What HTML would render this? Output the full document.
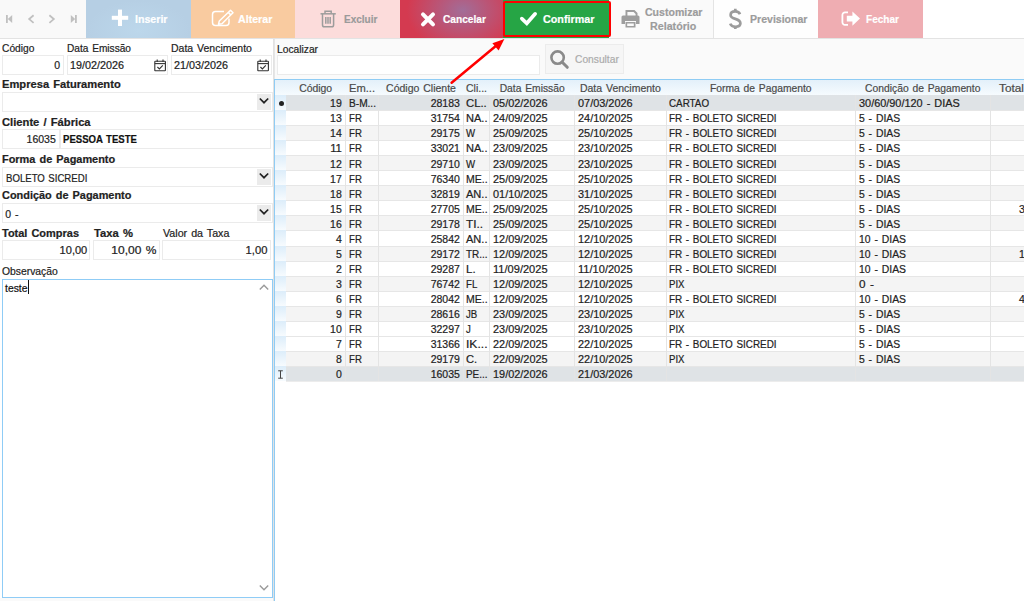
<!DOCTYPE html>
<html><head><meta charset="utf-8"><style>
html,body{margin:0;padding:0;}
body{width:1024px;height:601px;position:relative;overflow:hidden;background:#fff;font-family:"Liberation Sans",sans-serif;}
.t{position:absolute;white-space:nowrap;-webkit-text-stroke:0.2px currentColor;}
svg{overflow:visible}
</style></head><body>
<div style="position:absolute;left:0px;top:0px;width:1024px;height:38px;background:#fff;"></div>
<div style="position:absolute;left:0px;top:0px;width:86px;height:38px;background:#f9f9f9;"></div>
<div style="position:absolute;left:0px;top:38px;width:1024px;height:1px;background:#e3e3e3;"></div>
<svg style="position:absolute;left:0;top:0" width="86" height="38">
<g fill="#c0c0c0"><rect x="6" y="15" width="1.8" height="8"/><path d="M12.2 15 L7.8 19 L12.2 23 Z"/>
<path d="M70.8 15 L75.2 19 L70.8 23 Z"/><rect x="75" y="15" width="1.8" height="8"/></g>
<g fill="none" stroke="#c0c0c0" stroke-width="1.8"><path d="M33.6 15.3 L29.2 19.1 L33.6 22.9"/><path d="M49.4 15.3 L53.8 19.1 L49.4 22.9"/></g>
</svg>
<div style="position:absolute;left:86px;top:0px;width:105px;height:38px;background:radial-gradient(ellipse at 50% 80%,#bcd7eb 0%,#b6cfe4 70%);"></div>
<div style="position:absolute;left:191px;top:0px;width:104px;height:38px;background:#f9cba0;"></div>
<div style="position:absolute;left:295px;top:0px;width:105px;height:38px;background:#fcdcdb;"></div>
<div style="position:absolute;left:400px;top:0px;width:103px;height:38px;background:radial-gradient(ellipse 56px 42px at 61% 27%,#a26d98 0%,#b85779 42%,#d43a50 100%);"></div>
<div style="position:absolute;left:503px;top:0px;width:106px;height:38px;background:#26a545;"></div>
<div style="position:absolute;left:609px;top:0px;width:104px;height:38px;background:#fafafa;"></div>
<div style="position:absolute;left:713px;top:0px;width:1px;height:38px;background:#e4e4e4;"></div>
<div style="position:absolute;left:714px;top:0px;width:104px;height:38px;background:#fefefe;"></div>
<div style="position:absolute;left:818px;top:0px;width:105px;height:38px;background:#efadb2;"></div>
<div style="position:absolute;left:503px;top:1px;width:108px;height:36px;box-sizing:border-box;border:2.6px solid #ff0000;border-radius:2px;"></div>
<svg style="position:absolute;left:0;top:0" width="1024" height="40">
<g fill="#fff"><rect x="118" y="9.6" width="4" height="16.4"/><rect x="111.8" y="15.8" width="16.4" height="4"/></g>
<g fill="none" stroke="#fff" stroke-width="1.5"><path d="M224 11.5 H215.5 a3 3 0 0 0 -3 3 V22.5 a3 3 0 0 0 3 3 H226 a3 3 0 0 0 3 -3 V18.5"/></g>
<g fill="none" stroke="#fff" stroke-width="1.5" stroke-linejoin="round"><path d="M230.5 10.2 L233 12.7 L222 23.7 L218.5 24.3 L219.3 21 Z"/><path d="M228.3 12.4 L230.8 14.9"/></g>
<g fill="none" stroke="#9c9c9c" stroke-width="1.5"><path d="M320.5 13.8 H335.8"/><path d="M325 13.6 V11.2 H331.2 V13.6"/><path d="M322.5 14 V25 a1.8 1.8 0 0 0 1.8 1.8 H331.8 a1.8 1.8 0 0 0 1.8 -1.8 V14"/><path d="M325.8 17 V23.8 M328 17 V23.8 M330.2 17 V23.8"/></g>
<g stroke="#fff" stroke-width="4" stroke-linecap="round"><path d="M423 14.3 L433 24.3 M433 14.3 L423 24.3"/></g>
<g fill="none" stroke="#fff" stroke-width="3.6" stroke-linecap="round" stroke-linejoin="miter"><path d="M521.8 18.6 L526.8 23.3 L535.2 13.8"/></g>
<g fill="#9e9e9e"><path d="M625.5 10 H634.5 L637.5 13 V16.2 H635.6 V14 L633.6 12 H627.4 V16.2 H625.5 Z"/><path d="M621.5 17 a1.5 1.5 0 0 1 1.5 -1.5 H638 a1.5 1.5 0 0 1 1.5 1.5 V24 H636 V21 H625 V24 H621.5 Z"/><path d="M625.5 22 H635.5 V27.5 H625.5 Z M627.2 23.5 V26 H633.8 V23.5 Z"/></g>
<g fill="none" stroke="#9c9c9c" stroke-width="2.7" stroke-linecap="butt"><path d="M740 14.2 C739.2 12.2 737.4 11.4 735.2 11.4 C732.4 11.4 730.6 12.9 730.6 15 C730.6 17.4 732.8 18.2 735.3 18.9 C738 19.7 740.4 20.6 740.4 23.3 C740.4 25.5 738.4 26.8 735.4 26.8 C733 26.8 731 25.8 730.2 23.6"/><path d="M735.3 8.8 V11.6 M735.3 26.6 V29"/></g>
<g fill="#fff"><path d="M846.8 15.8 H852.4 V11.4 L860 18.6 L852.4 25.8 V21.4 H846.8 Z"/></g>
<g fill="none" stroke="#fff" stroke-width="1.8"><path d="M848 12.4 H845 a2.6 2.6 0 0 0 -2.6 2.6 V22.2 a2.6 2.6 0 0 0 2.6 2.6 H848"/></g>
</svg>
<div class="t" style="left:134.80px;top:11.30px;font-size:11.6px;line-height:16px;font-weight:bold;color:#fff;transform:scaleX(0.9165);transform-origin:left 0;">Inserir</div>
<div class="t" style="left:237.70px;top:11.30px;font-size:11.6px;line-height:16px;font-weight:bold;color:#fff;transform:scaleX(0.9172);transform-origin:left 0;">Alterar</div>
<div class="t" style="left:343.70px;top:11.30px;font-size:11.6px;line-height:16px;font-weight:bold;color:#9a9a9a;transform:scaleX(0.8608);transform-origin:left 0;">Excluir</div>
<div class="t" style="left:442.80px;top:11.30px;font-size:11.6px;line-height:16px;font-weight:bold;color:#fff;transform:scaleX(0.8774);transform-origin:left 0;">Cancelar</div>
<div class="t" style="left:543.20px;top:10.90px;font-size:11.6px;line-height:16px;font-weight:bold;color:#fff;transform:scaleX(0.9291);transform-origin:left 0;">Confirmar</div>
<div class="t" style="left:645.40px;top:3.90px;font-size:11.6px;line-height:16px;font-weight:bold;color:#9c9c9c;transform:scaleX(0.9103);transform-origin:left 0;">Customizar</div>
<div class="t" style="left:650.00px;top:18.40px;font-size:11.6px;line-height:16px;font-weight:bold;color:#9c9c9c;transform:scaleX(0.9229);transform-origin:left 0;">Relatório</div>
<div class="t" style="left:749.80px;top:11.30px;font-size:11.6px;line-height:16px;font-weight:bold;color:#9c9c9c;transform:scaleX(0.9100);transform-origin:left 0;">Previsionar</div>
<div class="t" style="left:866.40px;top:11.30px;font-size:11.6px;line-height:16px;font-weight:bold;color:#fff;transform:scaleX(0.8675);transform-origin:left 0;">Fechar</div>
<div style="position:absolute;left:0px;top:39px;width:273px;height:562px;background:#fff;"></div>
<div style="position:absolute;left:273px;top:39px;width:1px;height:562px;background:#e2e2e2;"></div>
<div class="t" style="left:1.60px;top:41.20px;font-size:10.5px;line-height:15px;color:#222;transform:scaleX(0.9737);transform-origin:left 0;">Código</div>
<div class="t" style="left:67.00px;top:41.20px;font-size:10.5px;line-height:15px;word-spacing:0.96px;color:#222;transform:scaleX(0.9650);transform-origin:left 0;">Data Emissão</div>
<div class="t" style="left:171.00px;top:41.20px;font-size:10.5px;line-height:15px;word-spacing:0.96px;color:#222;">Data Vencimento</div>
<div style="position:absolute;left:2px;top:55px;width:62px;height:20px;box-sizing:border-box;border:1px solid #ebebeb;background:#fff;"></div>
<div style="position:absolute;left:67px;top:55px;width:101px;height:20px;box-sizing:border-box;border:1px solid #ebebeb;background:#fff;"></div>
<div style="position:absolute;left:171px;top:55px;width:101px;height:20px;box-sizing:border-box;border:1px solid #ebebeb;background:#fff;"></div>
<div class="t" style="left:54.16px;top:58.00px;font-size:10.5px;line-height:15px;color:#222;">0</div>
<div class="t" style="left:70.00px;top:58.00px;font-size:10.5px;line-height:15px;color:#222;transform:scaleX(1.0275);transform-origin:left 0;">19/02/2026</div>
<div class="t" style="left:173.60px;top:58.00px;font-size:10.5px;line-height:15px;color:#222;transform:scaleX(1.0275);transform-origin:left 0;">21/03/2026</div>
<svg style="position:absolute;left:153.5px;top:58.6px" width="13" height="13"><g fill="none" stroke="#333" stroke-width="1.1"><rect x="0.8" y="2.2" width="10.6" height="9.6" rx="0.6"/><path d="M0.8 4.6 H11.4"/><path d="M3.2 0.6 V3 M9 0.6 V3"/><path d="M3.4 8 L5.4 9.9 L8.8 6.4"/></g></svg>
<svg style="position:absolute;left:257px;top:58.6px" width="13" height="13"><g fill="none" stroke="#333" stroke-width="1.1"><rect x="0.8" y="2.2" width="10.6" height="9.6" rx="0.6"/><path d="M0.8 4.6 H11.4"/><path d="M3.2 0.6 V3 M9 0.6 V3"/><path d="M3.4 8 L5.4 9.9 L8.8 6.4"/></g></svg>
<div class="t" style="left:1.60px;top:76.60px;font-size:10.5px;line-height:15px;word-spacing:0.96px;font-weight:bold;color:#222;transform:scaleX(1.0614);transform-origin:left 0;">Empresa Faturamento</div>
<div style="position:absolute;left:2px;top:92px;width:271px;height:20px;box-sizing:border-box;border:1px solid #ebebeb;background:#fff;"></div>
<div style="position:absolute;left:257px;top:94px;width:14px;height:16px;background:#ebebeb;"></div>
<svg style="position:absolute;left:258px;top:97px" width="12" height="8"><path d="M1.8 1.5 L6 5.7 L10.2 1.5" fill="none" stroke="#222" stroke-width="1.7"/></svg>
<div class="t" style="left:1.60px;top:114.90px;font-size:10.5px;line-height:15px;word-spacing:0.96px;font-weight:bold;color:#222;transform:scaleX(1.0670);transform-origin:left 0;">Cliente / Fábrica</div>
<div style="position:absolute;left:2px;top:129px;width:58px;height:20px;box-sizing:border-box;border:1px solid #ebebeb;background:#fff;"></div>
<div style="position:absolute;left:60px;top:129px;width:211px;height:20px;box-sizing:border-box;border:1px solid #ebebeb;background:#fff;"></div>
<div class="t" style="left:26.60px;top:131.70px;font-size:10.5px;line-height:15px;color:#222;">16035</div>
<div class="t" style="left:63.20px;top:131.70px;font-size:10.5px;line-height:15px;word-spacing:0.96px;font-weight:bold;color:#111;transform:scaleX(0.9125);transform-origin:left 0;">PESSOA TESTE</div>
<div class="t" style="left:1.60px;top:151.90px;font-size:10.5px;line-height:15px;word-spacing:0.96px;font-weight:bold;color:#222;transform:scaleX(1.0414);transform-origin:left 0;">Forma de Pagamento</div>
<div style="position:absolute;left:2px;top:167px;width:271px;height:20px;box-sizing:border-box;border:1px solid #ebebeb;background:#fff;"></div>
<div style="position:absolute;left:257px;top:169px;width:14px;height:16px;background:#ebebeb;"></div>
<svg style="position:absolute;left:258px;top:172px" width="12" height="8"><path d="M1.8 1.5 L6 5.7 L10.2 1.5" fill="none" stroke="#222" stroke-width="1.7"/></svg>
<div class="t" style="left:5.50px;top:171.20px;font-size:10.5px;line-height:15px;word-spacing:0.96px;color:#222;transform:scaleX(0.9148);transform-origin:left 0;">BOLETO SICREDI</div>
<div class="t" style="left:1.60px;top:187.90px;font-size:10.5px;line-height:15px;word-spacing:0.96px;font-weight:bold;color:#222;transform:scaleX(1.0398);transform-origin:left 0;">Condição de Pagamento</div>
<div style="position:absolute;left:2px;top:203px;width:271px;height:20px;box-sizing:border-box;border:1px solid #ebebeb;background:#fff;"></div>
<div style="position:absolute;left:257px;top:205px;width:14px;height:16px;background:#ebebeb;"></div>
<svg style="position:absolute;left:258px;top:208px" width="12" height="8"><path d="M1.8 1.5 L6 5.7 L10.2 1.5" fill="none" stroke="#222" stroke-width="1.7"/></svg>
<div class="t" style="left:5.20px;top:207.20px;font-size:10.5px;line-height:15px;word-spacing:0.96px;color:#222;">0 -</div>
<div class="t" style="left:1.60px;top:225.60px;font-size:10.5px;line-height:15px;word-spacing:0.96px;font-weight:bold;color:#222;transform:scaleX(1.0448);transform-origin:left 0;">Total Compras</div>
<div class="t" style="left:93.70px;top:225.60px;font-size:10.5px;line-height:15px;word-spacing:0.96px;font-weight:bold;color:#222;transform:scaleX(1.0696);transform-origin:left 0;">Taxa %</div>
<div class="t" style="left:162.50px;top:226.20px;font-size:10.5px;line-height:15px;word-spacing:0.96px;color:#222;transform:scaleX(1.0190);transform-origin:left 0;">Valor da Taxa</div>
<div style="position:absolute;left:2px;top:240px;width:88px;height:20px;box-sizing:border-box;border:1px solid #ebebeb;background:#fff;"></div>
<div style="position:absolute;left:93px;top:240px;width:67px;height:20px;box-sizing:border-box;border:1px solid #ebebeb;background:#fff;"></div>
<div style="position:absolute;left:162px;top:240px;width:109px;height:20px;box-sizing:border-box;border:1px solid #ebebeb;background:#fff;"></div>
<div class="t" style="left:60.52px;top:243.00px;font-size:10.5px;line-height:15px;color:#222;transform:scaleX(1.0544);transform-origin:right 0;">10,00</div>
<div class="t" style="left:116.51px;top:243.00px;font-size:10.5px;line-height:15px;word-spacing:0.96px;color:#222;transform:scaleX(1.1426);transform-origin:right 0;">10,00 %</div>
<div class="t" style="left:246.96px;top:243.00px;font-size:10.5px;line-height:15px;color:#222;transform:scaleX(1.0685);transform-origin:right 0;">1,00</div>
<div class="t" style="left:1.60px;top:263.90px;font-size:10.5px;line-height:15px;color:#222;transform:scaleX(0.9856);transform-origin:left 0;">Observação</div>
<div style="position:absolute;left:2px;top:279px;width:271px;height:319px;box-sizing:border-box;border:1px solid #8fccf6;background:#fff;"></div>
<div class="t" style="left:4.80px;top:281.30px;font-size:10.5px;line-height:15px;color:#111;transform:scaleX(0.9884);transform-origin:left 0;">teste</div>
<div style="position:absolute;left:28px;top:280px;width:1px;height:14px;background:#111;"></div>
<svg style="position:absolute;left:258px;top:283px" width="12" height="8"><path d="M1.8 6.5 L6 2.3 L10.2 6.5" fill="none" stroke="#9a9a9a" stroke-width="1.4"/></svg>
<svg style="position:absolute;left:258px;top:584px" width="12" height="8"><path d="M1.8 1.5 L6 5.7 L10.2 1.5" fill="none" stroke="#9a9a9a" stroke-width="1.4"/></svg>
<div style="position:absolute;left:0px;top:598px;width:273px;height:3px;background:#fafafa;"></div>
<div style="position:absolute;left:274px;top:39px;width:750px;height:40px;background:#fafafa;"></div>
<div style="position:absolute;left:274px;top:39px;width:1px;height:40px;background:#e6e6e6;"></div>
<div class="t" style="left:277.40px;top:41.50px;font-size:10.5px;line-height:15px;color:#222;transform:scaleX(0.9757);transform-origin:left 0;">Localizar</div>
<div style="position:absolute;left:277px;top:55px;width:263px;height:20px;box-sizing:border-box;border:1px solid #ebebeb;background:#fff;"></div>
<div style="position:absolute;left:545px;top:44px;width:79px;height:30px;box-sizing:border-box;border:1px solid #ececec;background:#f6f6f6;"></div>
<svg style="position:absolute;left:548px;top:48px" width="24" height="24"><circle cx="9.6" cy="9.6" r="6.2" fill="none" stroke="#8a8a8a" stroke-width="2.6"/><path d="M14 14 L19.3 19.3" stroke="#8a8a8a" stroke-width="3" stroke-linecap="round"/></svg>
<div class="t" style="left:574.50px;top:51.50px;font-size:11px;line-height:15px;color:#ababab;transform:scaleX(0.9303);transform-origin:left 0;">Consultar</div>
<div style="position:absolute;left:274px;top:79px;width:750px;height:522px;background:#fff;"></div>
<div style="position:absolute;left:275px;top:80px;width:749px;height:15px;background:linear-gradient(#e3f0fa,#f6fbfe);"></div>
<div style="position:absolute;left:274px;top:79px;width:750px;height:1px;background:#8fccf4;"></div>
<div style="position:absolute;left:274px;top:79px;width:1px;height:522px;background:#8fccf4;"></div>
<div style="position:absolute;left:286px;top:95px;width:738px;height:15px;background:#dfe3e6;"></div>
<div style="position:absolute;left:275px;top:95px;width:11px;height:15px;background:linear-gradient(#dcedfa,#f7fbfe);"></div>
<div style="position:absolute;left:286px;top:110px;width:738px;height:15px;background:#ffffff;"></div>
<div style="position:absolute;left:286px;top:110px;width:738px;height:1px;background:#e6e6e6;"></div>
<div style="position:absolute;left:275px;top:110px;width:11px;height:15px;background:linear-gradient(#dcedfa,#f7fbfe);"></div>
<div style="position:absolute;left:286px;top:125px;width:738px;height:15px;background:#f4f4f4;"></div>
<div style="position:absolute;left:286px;top:125px;width:738px;height:1px;background:#e6e6e6;"></div>
<div style="position:absolute;left:275px;top:125px;width:11px;height:15px;background:linear-gradient(#dcedfa,#f7fbfe);"></div>
<div style="position:absolute;left:286px;top:140px;width:738px;height:15px;background:#ffffff;"></div>
<div style="position:absolute;left:286px;top:140px;width:738px;height:1px;background:#e6e6e6;"></div>
<div style="position:absolute;left:275px;top:140px;width:11px;height:15px;background:linear-gradient(#dcedfa,#f7fbfe);"></div>
<div style="position:absolute;left:286px;top:155px;width:738px;height:15px;background:#f4f4f4;"></div>
<div style="position:absolute;left:286px;top:155px;width:738px;height:1px;background:#e6e6e6;"></div>
<div style="position:absolute;left:275px;top:155px;width:11px;height:15px;background:linear-gradient(#dcedfa,#f7fbfe);"></div>
<div style="position:absolute;left:286px;top:170px;width:738px;height:15px;background:#ffffff;"></div>
<div style="position:absolute;left:286px;top:170px;width:738px;height:1px;background:#e6e6e6;"></div>
<div style="position:absolute;left:275px;top:170px;width:11px;height:15px;background:linear-gradient(#dcedfa,#f7fbfe);"></div>
<div style="position:absolute;left:286px;top:185px;width:738px;height:15px;background:#f4f4f4;"></div>
<div style="position:absolute;left:286px;top:185px;width:738px;height:1px;background:#e6e6e6;"></div>
<div style="position:absolute;left:275px;top:185px;width:11px;height:15px;background:linear-gradient(#dcedfa,#f7fbfe);"></div>
<div style="position:absolute;left:286px;top:200px;width:738px;height:15px;background:#ffffff;"></div>
<div style="position:absolute;left:286px;top:200px;width:738px;height:1px;background:#e6e6e6;"></div>
<div style="position:absolute;left:275px;top:200px;width:11px;height:15px;background:linear-gradient(#dcedfa,#f7fbfe);"></div>
<div style="position:absolute;left:286px;top:215px;width:738px;height:15px;background:#f4f4f4;"></div>
<div style="position:absolute;left:286px;top:215px;width:738px;height:1px;background:#e6e6e6;"></div>
<div style="position:absolute;left:275px;top:215px;width:11px;height:15px;background:linear-gradient(#dcedfa,#f7fbfe);"></div>
<div style="position:absolute;left:286px;top:230px;width:738px;height:16px;background:#ffffff;"></div>
<div style="position:absolute;left:286px;top:230px;width:738px;height:1px;background:#e6e6e6;"></div>
<div style="position:absolute;left:275px;top:230px;width:11px;height:16px;background:linear-gradient(#dcedfa,#f7fbfe);"></div>
<div style="position:absolute;left:286px;top:246px;width:738px;height:15px;background:#f4f4f4;"></div>
<div style="position:absolute;left:286px;top:246px;width:738px;height:1px;background:#e6e6e6;"></div>
<div style="position:absolute;left:275px;top:246px;width:11px;height:15px;background:linear-gradient(#dcedfa,#f7fbfe);"></div>
<div style="position:absolute;left:286px;top:261px;width:738px;height:15px;background:#ffffff;"></div>
<div style="position:absolute;left:286px;top:261px;width:738px;height:1px;background:#e6e6e6;"></div>
<div style="position:absolute;left:275px;top:261px;width:11px;height:15px;background:linear-gradient(#dcedfa,#f7fbfe);"></div>
<div style="position:absolute;left:286px;top:276px;width:738px;height:15px;background:#f4f4f4;"></div>
<div style="position:absolute;left:286px;top:276px;width:738px;height:1px;background:#e6e6e6;"></div>
<div style="position:absolute;left:275px;top:276px;width:11px;height:15px;background:linear-gradient(#dcedfa,#f7fbfe);"></div>
<div style="position:absolute;left:286px;top:291px;width:738px;height:15px;background:#ffffff;"></div>
<div style="position:absolute;left:286px;top:291px;width:738px;height:1px;background:#e6e6e6;"></div>
<div style="position:absolute;left:275px;top:291px;width:11px;height:15px;background:linear-gradient(#dcedfa,#f7fbfe);"></div>
<div style="position:absolute;left:286px;top:306px;width:738px;height:15px;background:#f4f4f4;"></div>
<div style="position:absolute;left:286px;top:306px;width:738px;height:1px;background:#e6e6e6;"></div>
<div style="position:absolute;left:275px;top:306px;width:11px;height:15px;background:linear-gradient(#dcedfa,#f7fbfe);"></div>
<div style="position:absolute;left:286px;top:321px;width:738px;height:15px;background:#ffffff;"></div>
<div style="position:absolute;left:286px;top:321px;width:738px;height:1px;background:#e6e6e6;"></div>
<div style="position:absolute;left:275px;top:321px;width:11px;height:15px;background:linear-gradient(#dcedfa,#f7fbfe);"></div>
<div style="position:absolute;left:286px;top:336px;width:738px;height:15px;background:#ffffff;"></div>
<div style="position:absolute;left:286px;top:336px;width:738px;height:1px;background:#e6e6e6;"></div>
<div style="position:absolute;left:275px;top:336px;width:11px;height:15px;background:linear-gradient(#dcedfa,#f7fbfe);"></div>
<div style="position:absolute;left:286px;top:351px;width:738px;height:15px;background:#f4f4f4;"></div>
<div style="position:absolute;left:286px;top:351px;width:738px;height:1px;background:#e6e6e6;"></div>
<div style="position:absolute;left:275px;top:351px;width:11px;height:15px;background:linear-gradient(#dcedfa,#f7fbfe);"></div>
<div style="position:absolute;left:286px;top:366px;width:738px;height:15px;background:#dfe3e6;"></div>
<div style="position:absolute;left:286px;top:366px;width:738px;height:1px;background:#e6e6e6;"></div>
<div style="position:absolute;left:275px;top:366px;width:11px;height:15px;background:linear-gradient(#dcedfa,#f7fbfe);"></div>
<div style="position:absolute;left:286px;top:381px;width:738px;height:1px;background:#ececec;"></div>
<div style="position:absolute;left:345px;top:95px;width:1px;height:286px;background:#e4e4e4;"></div>
<div style="position:absolute;left:378px;top:95px;width:1px;height:286px;background:#e4e4e4;"></div>
<div style="position:absolute;left:463px;top:95px;width:1px;height:286px;background:#e4e4e4;"></div>
<div style="position:absolute;left:489px;top:95px;width:1px;height:286px;background:#e4e4e4;"></div>
<div style="position:absolute;left:574px;top:95px;width:1px;height:286px;background:#e4e4e4;"></div>
<div style="position:absolute;left:666px;top:95px;width:1px;height:286px;background:#e4e4e4;"></div>
<div style="position:absolute;left:855px;top:95px;width:1px;height:286px;background:#e4e4e4;"></div>
<div style="position:absolute;left:990px;top:95px;width:1px;height:286px;background:#e4e4e4;"></div>
<div class="t" style="left:299.36px;top:80.80px;font-size:10.5px;line-height:15px;color:#4a4a4a;transform:scaleX(0.9917);transform-origin:center 0;">Código</div>
<div class="t" style="left:349.00px;top:80.80px;font-size:10.5px;line-height:15px;color:#4a4a4a;transform:scaleX(1.0611);transform-origin:left 0;">Em...</div>
<div class="t" style="left:386.08px;top:80.80px;font-size:10.5px;line-height:15px;word-spacing:0.96px;color:#4a4a4a;">Código Cliente</div>
<div class="t" style="left:466.00px;top:80.80px;font-size:10.5px;line-height:15px;color:#4a4a4a;">Cli...</div>
<div class="t" style="left:498.84px;top:80.80px;font-size:10.5px;line-height:15px;word-spacing:0.96px;color:#4a4a4a;transform:scaleX(0.9801);transform-origin:center 0;">Data Emissão</div>
<div class="t" style="left:579.94px;top:80.80px;font-size:10.5px;line-height:15px;word-spacing:0.96px;color:#4a4a4a;">Data Vencimento</div>
<div class="t" style="left:709.46px;top:80.80px;font-size:10.5px;line-height:15px;word-spacing:0.96px;color:#4a4a4a;transform:scaleX(0.9818);transform-origin:center 0;">Forma de Pagamento</div>
<div class="t" style="left:864.34px;top:80.80px;font-size:10.5px;line-height:15px;word-spacing:0.96px;color:#4a4a4a;transform:scaleX(0.9820);transform-origin:center 0;">Condição de Pagamento</div>
<div class="t" style="left:999.00px;top:80.80px;font-size:10.5px;line-height:15px;color:#4a4a4a;transform:scaleX(1.1272);transform-origin:left 0;">Total</div>
<div class="t" style="left:330.12px;top:96.30px;font-size:10.5px;line-height:15px;color:#222;">19</div>
<div class="t" style="left:349.20px;top:96.30px;font-size:10.5px;line-height:15px;color:#222;transform:scaleX(0.9643);transform-origin:left 0;">B-M...</div>
<div class="t" style="left:430.70px;top:96.30px;font-size:10.5px;line-height:15px;color:#222;">28183</div>
<div class="t" style="left:466.00px;top:96.30px;font-size:10.5px;line-height:15px;color:#222;transform:scaleX(1.0778);transform-origin:left 0;">CL..</div>
<div class="t" style="left:492.80px;top:96.30px;font-size:10.5px;line-height:15px;color:#222;transform:scaleX(1.0390);transform-origin:left 0;">05/02/2026</div>
<div class="t" style="left:577.70px;top:96.30px;font-size:10.5px;line-height:15px;color:#222;transform:scaleX(1.0390);transform-origin:left 0;">07/03/2026</div>
<div class="t" style="left:669.40px;top:96.30px;font-size:10.5px;line-height:15px;color:#222;transform:scaleX(0.9367);transform-origin:left 0;">CARTAO</div>
<div class="t" style="left:859.00px;top:96.30px;font-size:10.5px;line-height:15px;word-spacing:0.96px;color:#222;transform:scaleX(1.0383);transform-origin:left 0;">30/60/90/120 - DIAS</div>
<div class="t" style="left:330.12px;top:111.35px;font-size:10.5px;line-height:15px;color:#222;">13</div>
<div class="t" style="left:349.20px;top:111.35px;font-size:10.5px;line-height:15px;color:#222;transform:scaleX(0.9160);transform-origin:left 0;">FR</div>
<div class="t" style="left:430.70px;top:111.35px;font-size:10.5px;line-height:15px;color:#222;">31754</div>
<div class="t" style="left:466.00px;top:111.35px;font-size:10.5px;line-height:15px;color:#222;transform:scaleX(1.0528);transform-origin:left 0;">NA..</div>
<div class="t" style="left:492.80px;top:111.35px;font-size:10.5px;line-height:15px;color:#222;transform:scaleX(1.0390);transform-origin:left 0;">24/09/2025</div>
<div class="t" style="left:577.70px;top:111.35px;font-size:10.5px;line-height:15px;color:#222;transform:scaleX(1.0390);transform-origin:left 0;">24/10/2025</div>
<div class="t" style="left:669.40px;top:111.35px;font-size:10.5px;line-height:15px;word-spacing:0.96px;color:#222;transform:scaleX(0.9424);transform-origin:left 0;">FR - BOLETO SICREDI</div>
<div class="t" style="left:859.00px;top:111.35px;font-size:10.5px;line-height:15px;word-spacing:0.96px;color:#222;transform:scaleX(0.9890);transform-origin:left 0;">5 - DIAS</div>
<div class="t" style="left:330.12px;top:126.40px;font-size:10.5px;line-height:15px;color:#222;">14</div>
<div class="t" style="left:349.20px;top:126.40px;font-size:10.5px;line-height:15px;color:#222;transform:scaleX(0.9160);transform-origin:left 0;">FR</div>
<div class="t" style="left:430.70px;top:126.40px;font-size:10.5px;line-height:15px;color:#222;">29175</div>
<div class="t" style="left:466.00px;top:126.40px;font-size:10.5px;line-height:15px;color:#222;transform:scaleX(0.9160);transform-origin:left 0;">W</div>
<div class="t" style="left:492.80px;top:126.40px;font-size:10.5px;line-height:15px;color:#222;transform:scaleX(1.0390);transform-origin:left 0;">25/09/2025</div>
<div class="t" style="left:577.70px;top:126.40px;font-size:10.5px;line-height:15px;color:#222;transform:scaleX(1.0390);transform-origin:left 0;">25/10/2025</div>
<div class="t" style="left:669.40px;top:126.40px;font-size:10.5px;line-height:15px;word-spacing:0.96px;color:#222;transform:scaleX(0.9424);transform-origin:left 0;">FR - BOLETO SICREDI</div>
<div class="t" style="left:859.00px;top:126.40px;font-size:10.5px;line-height:15px;word-spacing:0.96px;color:#222;transform:scaleX(0.9890);transform-origin:left 0;">5 - DIAS</div>
<div class="t" style="left:330.90px;top:141.45px;font-size:10.5px;line-height:15px;color:#222;transform:scaleX(1.0769);transform-origin:right 0;">11</div>
<div class="t" style="left:349.20px;top:141.45px;font-size:10.5px;line-height:15px;color:#222;transform:scaleX(0.9160);transform-origin:left 0;">FR</div>
<div class="t" style="left:430.70px;top:141.45px;font-size:10.5px;line-height:15px;color:#222;">33021</div>
<div class="t" style="left:466.00px;top:141.45px;font-size:10.5px;line-height:15px;color:#222;transform:scaleX(1.0528);transform-origin:left 0;">NA..</div>
<div class="t" style="left:492.80px;top:141.45px;font-size:10.5px;line-height:15px;color:#222;transform:scaleX(1.0390);transform-origin:left 0;">23/09/2025</div>
<div class="t" style="left:577.70px;top:141.45px;font-size:10.5px;line-height:15px;color:#222;transform:scaleX(1.0390);transform-origin:left 0;">23/10/2025</div>
<div class="t" style="left:669.40px;top:141.45px;font-size:10.5px;line-height:15px;word-spacing:0.96px;color:#222;transform:scaleX(0.9424);transform-origin:left 0;">FR - BOLETO SICREDI</div>
<div class="t" style="left:859.00px;top:141.45px;font-size:10.5px;line-height:15px;word-spacing:0.96px;color:#222;transform:scaleX(0.9890);transform-origin:left 0;">5 - DIAS</div>
<div class="t" style="left:330.12px;top:156.50px;font-size:10.5px;line-height:15px;color:#222;">12</div>
<div class="t" style="left:349.20px;top:156.50px;font-size:10.5px;line-height:15px;color:#222;transform:scaleX(0.9160);transform-origin:left 0;">FR</div>
<div class="t" style="left:430.70px;top:156.50px;font-size:10.5px;line-height:15px;color:#222;">29710</div>
<div class="t" style="left:466.00px;top:156.50px;font-size:10.5px;line-height:15px;color:#222;transform:scaleX(0.9160);transform-origin:left 0;">W</div>
<div class="t" style="left:492.80px;top:156.50px;font-size:10.5px;line-height:15px;color:#222;transform:scaleX(1.0390);transform-origin:left 0;">23/09/2025</div>
<div class="t" style="left:577.70px;top:156.50px;font-size:10.5px;line-height:15px;color:#222;transform:scaleX(1.0390);transform-origin:left 0;">23/10/2025</div>
<div class="t" style="left:669.40px;top:156.50px;font-size:10.5px;line-height:15px;word-spacing:0.96px;color:#222;transform:scaleX(0.9424);transform-origin:left 0;">FR - BOLETO SICREDI</div>
<div class="t" style="left:859.00px;top:156.50px;font-size:10.5px;line-height:15px;word-spacing:0.96px;color:#222;transform:scaleX(0.9890);transform-origin:left 0;">5 - DIAS</div>
<div class="t" style="left:330.12px;top:171.55px;font-size:10.5px;line-height:15px;color:#222;">17</div>
<div class="t" style="left:349.20px;top:171.55px;font-size:10.5px;line-height:15px;color:#222;transform:scaleX(0.9160);transform-origin:left 0;">FR</div>
<div class="t" style="left:430.70px;top:171.55px;font-size:10.5px;line-height:15px;color:#222;">76340</div>
<div class="t" style="left:466.00px;top:171.55px;font-size:10.5px;line-height:15px;color:#222;">ME..</div>
<div class="t" style="left:492.80px;top:171.55px;font-size:10.5px;line-height:15px;color:#222;transform:scaleX(1.0390);transform-origin:left 0;">25/09/2025</div>
<div class="t" style="left:577.70px;top:171.55px;font-size:10.5px;line-height:15px;color:#222;transform:scaleX(1.0390);transform-origin:left 0;">25/10/2025</div>
<div class="t" style="left:669.40px;top:171.55px;font-size:10.5px;line-height:15px;word-spacing:0.96px;color:#222;transform:scaleX(0.9424);transform-origin:left 0;">FR - BOLETO SICREDI</div>
<div class="t" style="left:859.00px;top:171.55px;font-size:10.5px;line-height:15px;word-spacing:0.96px;color:#222;transform:scaleX(0.9890);transform-origin:left 0;">5 - DIAS</div>
<div class="t" style="left:330.12px;top:186.60px;font-size:10.5px;line-height:15px;color:#222;">18</div>
<div class="t" style="left:349.20px;top:186.60px;font-size:10.5px;line-height:15px;color:#222;transform:scaleX(0.9160);transform-origin:left 0;">FR</div>
<div class="t" style="left:430.70px;top:186.60px;font-size:10.5px;line-height:15px;color:#222;">32819</div>
<div class="t" style="left:466.00px;top:186.60px;font-size:10.5px;line-height:15px;color:#222;transform:scaleX(1.0528);transform-origin:left 0;">AN..</div>
<div class="t" style="left:492.80px;top:186.60px;font-size:10.5px;line-height:15px;color:#222;transform:scaleX(1.0390);transform-origin:left 0;">01/10/2025</div>
<div class="t" style="left:577.70px;top:186.60px;font-size:10.5px;line-height:15px;color:#222;transform:scaleX(1.0390);transform-origin:left 0;">31/10/2025</div>
<div class="t" style="left:669.40px;top:186.60px;font-size:10.5px;line-height:15px;word-spacing:0.96px;color:#222;transform:scaleX(0.9424);transform-origin:left 0;">FR - BOLETO SICREDI</div>
<div class="t" style="left:859.00px;top:186.60px;font-size:10.5px;line-height:15px;word-spacing:0.96px;color:#222;transform:scaleX(0.9890);transform-origin:left 0;">5 - DIAS</div>
<div class="t" style="left:330.12px;top:201.65px;font-size:10.5px;line-height:15px;color:#222;">15</div>
<div class="t" style="left:349.20px;top:201.65px;font-size:10.5px;line-height:15px;color:#222;transform:scaleX(0.9160);transform-origin:left 0;">FR</div>
<div class="t" style="left:430.70px;top:201.65px;font-size:10.5px;line-height:15px;color:#222;">27705</div>
<div class="t" style="left:466.00px;top:201.65px;font-size:10.5px;line-height:15px;color:#222;">ME..</div>
<div class="t" style="left:492.80px;top:201.65px;font-size:10.5px;line-height:15px;color:#222;transform:scaleX(1.0390);transform-origin:left 0;">25/09/2025</div>
<div class="t" style="left:577.70px;top:201.65px;font-size:10.5px;line-height:15px;color:#222;transform:scaleX(1.0390);transform-origin:left 0;">25/10/2025</div>
<div class="t" style="left:669.40px;top:201.65px;font-size:10.5px;line-height:15px;word-spacing:0.96px;color:#222;transform:scaleX(0.9424);transform-origin:left 0;">FR - BOLETO SICREDI</div>
<div class="t" style="left:859.00px;top:201.65px;font-size:10.5px;line-height:15px;word-spacing:0.96px;color:#222;transform:scaleX(0.9890);transform-origin:left 0;">5 - DIAS</div>
<div class="t" style="left:1019.00px;top:201.65px;font-size:10.5px;line-height:15px;color:#222;">3</div>
<div class="t" style="left:330.12px;top:216.70px;font-size:10.5px;line-height:15px;color:#222;">16</div>
<div class="t" style="left:349.20px;top:216.70px;font-size:10.5px;line-height:15px;color:#222;transform:scaleX(0.9160);transform-origin:left 0;">FR</div>
<div class="t" style="left:430.70px;top:216.70px;font-size:10.5px;line-height:15px;color:#222;">29178</div>
<div class="t" style="left:466.00px;top:216.70px;font-size:10.5px;line-height:15px;color:#222;transform:scaleX(1.1214);transform-origin:left 0;">TI..</div>
<div class="t" style="left:492.80px;top:216.70px;font-size:10.5px;line-height:15px;color:#222;transform:scaleX(1.0390);transform-origin:left 0;">25/09/2025</div>
<div class="t" style="left:577.70px;top:216.70px;font-size:10.5px;line-height:15px;color:#222;transform:scaleX(1.0390);transform-origin:left 0;">25/10/2025</div>
<div class="t" style="left:669.40px;top:216.70px;font-size:10.5px;line-height:15px;word-spacing:0.96px;color:#222;transform:scaleX(0.9424);transform-origin:left 0;">FR - BOLETO SICREDI</div>
<div class="t" style="left:859.00px;top:216.70px;font-size:10.5px;line-height:15px;word-spacing:0.96px;color:#222;transform:scaleX(0.9890);transform-origin:left 0;">5 - DIAS</div>
<div class="t" style="left:335.96px;top:231.75px;font-size:10.5px;line-height:15px;color:#222;">4</div>
<div class="t" style="left:349.20px;top:231.75px;font-size:10.5px;line-height:15px;color:#222;transform:scaleX(0.9160);transform-origin:left 0;">FR</div>
<div class="t" style="left:430.70px;top:231.75px;font-size:10.5px;line-height:15px;color:#222;">25842</div>
<div class="t" style="left:466.00px;top:231.75px;font-size:10.5px;line-height:15px;color:#222;transform:scaleX(1.0528);transform-origin:left 0;">AN..</div>
<div class="t" style="left:492.80px;top:231.75px;font-size:10.5px;line-height:15px;color:#222;transform:scaleX(1.0390);transform-origin:left 0;">12/09/2025</div>
<div class="t" style="left:577.70px;top:231.75px;font-size:10.5px;line-height:15px;color:#222;transform:scaleX(1.0390);transform-origin:left 0;">12/10/2025</div>
<div class="t" style="left:669.40px;top:231.75px;font-size:10.5px;line-height:15px;word-spacing:0.96px;color:#222;transform:scaleX(0.9424);transform-origin:left 0;">FR - BOLETO SICREDI</div>
<div class="t" style="left:859.00px;top:231.75px;font-size:10.5px;line-height:15px;word-spacing:0.96px;color:#222;transform:scaleX(0.9910);transform-origin:left 0;">10 - DIAS</div>
<div class="t" style="left:335.96px;top:246.80px;font-size:10.5px;line-height:15px;color:#222;">5</div>
<div class="t" style="left:349.20px;top:246.80px;font-size:10.5px;line-height:15px;color:#222;transform:scaleX(0.9160);transform-origin:left 0;">FR</div>
<div class="t" style="left:430.70px;top:246.80px;font-size:10.5px;line-height:15px;color:#222;">29172</div>
<div class="t" style="left:466.00px;top:246.80px;font-size:10.5px;line-height:15px;color:#222;transform:scaleX(0.9451);transform-origin:left 0;">TR...</div>
<div class="t" style="left:492.80px;top:246.80px;font-size:10.5px;line-height:15px;color:#222;transform:scaleX(1.0390);transform-origin:left 0;">12/09/2025</div>
<div class="t" style="left:577.70px;top:246.80px;font-size:10.5px;line-height:15px;color:#222;transform:scaleX(1.0390);transform-origin:left 0;">12/10/2025</div>
<div class="t" style="left:669.40px;top:246.80px;font-size:10.5px;line-height:15px;word-spacing:0.96px;color:#222;transform:scaleX(0.9424);transform-origin:left 0;">FR - BOLETO SICREDI</div>
<div class="t" style="left:859.00px;top:246.80px;font-size:10.5px;line-height:15px;word-spacing:0.96px;color:#222;transform:scaleX(0.9910);transform-origin:left 0;">10 - DIAS</div>
<div class="t" style="left:1019.00px;top:246.80px;font-size:10.5px;line-height:15px;color:#222;">1</div>
<div class="t" style="left:335.96px;top:261.85px;font-size:10.5px;line-height:15px;color:#222;">2</div>
<div class="t" style="left:349.20px;top:261.85px;font-size:10.5px;line-height:15px;color:#222;transform:scaleX(0.9160);transform-origin:left 0;">FR</div>
<div class="t" style="left:430.70px;top:261.85px;font-size:10.5px;line-height:15px;color:#222;">29287</div>
<div class="t" style="left:466.00px;top:261.85px;font-size:10.5px;line-height:15px;color:#222;transform:scaleX(1.0939);transform-origin:left 0;">L.</div>
<div class="t" style="left:492.80px;top:261.85px;font-size:10.5px;line-height:15px;color:#222;transform:scaleX(1.0546);transform-origin:left 0;">11/09/2025</div>
<div class="t" style="left:577.70px;top:261.85px;font-size:10.5px;line-height:15px;color:#222;transform:scaleX(1.0546);transform-origin:left 0;">11/10/2025</div>
<div class="t" style="left:669.40px;top:261.85px;font-size:10.5px;line-height:15px;word-spacing:0.96px;color:#222;transform:scaleX(0.9424);transform-origin:left 0;">FR - BOLETO SICREDI</div>
<div class="t" style="left:859.00px;top:261.85px;font-size:10.5px;line-height:15px;word-spacing:0.96px;color:#222;transform:scaleX(0.9910);transform-origin:left 0;">10 - DIAS</div>
<div class="t" style="left:335.96px;top:276.90px;font-size:10.5px;line-height:15px;color:#222;">3</div>
<div class="t" style="left:349.20px;top:276.90px;font-size:10.5px;line-height:15px;color:#222;transform:scaleX(0.9160);transform-origin:left 0;">FR</div>
<div class="t" style="left:430.70px;top:276.90px;font-size:10.5px;line-height:15px;color:#222;">76742</div>
<div class="t" style="left:466.00px;top:276.90px;font-size:10.5px;line-height:15px;color:#222;transform:scaleX(0.9160);transform-origin:left 0;">FL</div>
<div class="t" style="left:492.80px;top:276.90px;font-size:10.5px;line-height:15px;color:#222;transform:scaleX(1.0390);transform-origin:left 0;">12/09/2025</div>
<div class="t" style="left:577.70px;top:276.90px;font-size:10.5px;line-height:15px;color:#222;transform:scaleX(1.0390);transform-origin:left 0;">12/10/2025</div>
<div class="t" style="left:669.40px;top:276.90px;font-size:10.5px;line-height:15px;color:#222;transform:scaleX(0.9160);transform-origin:left 0;">PIX</div>
<div class="t" style="left:859.00px;top:276.90px;font-size:10.5px;line-height:15px;word-spacing:0.96px;color:#222;transform:scaleX(1.1213);transform-origin:left 0;">0 -</div>
<div class="t" style="left:335.96px;top:291.95px;font-size:10.5px;line-height:15px;color:#222;">6</div>
<div class="t" style="left:349.20px;top:291.95px;font-size:10.5px;line-height:15px;color:#222;transform:scaleX(0.9160);transform-origin:left 0;">FR</div>
<div class="t" style="left:430.70px;top:291.95px;font-size:10.5px;line-height:15px;color:#222;">28042</div>
<div class="t" style="left:466.00px;top:291.95px;font-size:10.5px;line-height:15px;color:#222;">ME..</div>
<div class="t" style="left:492.80px;top:291.95px;font-size:10.5px;line-height:15px;color:#222;transform:scaleX(1.0390);transform-origin:left 0;">12/09/2025</div>
<div class="t" style="left:577.70px;top:291.95px;font-size:10.5px;line-height:15px;color:#222;transform:scaleX(1.0390);transform-origin:left 0;">12/10/2025</div>
<div class="t" style="left:669.40px;top:291.95px;font-size:10.5px;line-height:15px;word-spacing:0.96px;color:#222;transform:scaleX(0.9424);transform-origin:left 0;">FR - BOLETO SICREDI</div>
<div class="t" style="left:859.00px;top:291.95px;font-size:10.5px;line-height:15px;word-spacing:0.96px;color:#222;transform:scaleX(0.9910);transform-origin:left 0;">10 - DIAS</div>
<div class="t" style="left:1019.00px;top:291.95px;font-size:10.5px;line-height:15px;color:#222;">4</div>
<div class="t" style="left:335.96px;top:307.00px;font-size:10.5px;line-height:15px;color:#222;">9</div>
<div class="t" style="left:349.20px;top:307.00px;font-size:10.5px;line-height:15px;color:#222;transform:scaleX(0.9160);transform-origin:left 0;">FR</div>
<div class="t" style="left:430.70px;top:307.00px;font-size:10.5px;line-height:15px;color:#222;">28616</div>
<div class="t" style="left:466.00px;top:307.00px;font-size:10.5px;line-height:15px;color:#222;transform:scaleX(0.9160);transform-origin:left 0;">JB</div>
<div class="t" style="left:492.80px;top:307.00px;font-size:10.5px;line-height:15px;color:#222;transform:scaleX(1.0390);transform-origin:left 0;">23/09/2025</div>
<div class="t" style="left:577.70px;top:307.00px;font-size:10.5px;line-height:15px;color:#222;transform:scaleX(1.0390);transform-origin:left 0;">23/10/2025</div>
<div class="t" style="left:669.40px;top:307.00px;font-size:10.5px;line-height:15px;color:#222;transform:scaleX(0.9160);transform-origin:left 0;">PIX</div>
<div class="t" style="left:859.00px;top:307.00px;font-size:10.5px;line-height:15px;word-spacing:0.96px;color:#222;transform:scaleX(0.9890);transform-origin:left 0;">5 - DIAS</div>
<div class="t" style="left:330.12px;top:322.05px;font-size:10.5px;line-height:15px;color:#222;">10</div>
<div class="t" style="left:349.20px;top:322.05px;font-size:10.5px;line-height:15px;color:#222;transform:scaleX(0.9160);transform-origin:left 0;">FR</div>
<div class="t" style="left:430.70px;top:322.05px;font-size:10.5px;line-height:15px;color:#222;">32297</div>
<div class="t" style="left:466.00px;top:322.05px;font-size:10.5px;line-height:15px;color:#222;transform:scaleX(0.9160);transform-origin:left 0;">J</div>
<div class="t" style="left:492.80px;top:322.05px;font-size:10.5px;line-height:15px;color:#222;transform:scaleX(1.0390);transform-origin:left 0;">23/09/2025</div>
<div class="t" style="left:577.70px;top:322.05px;font-size:10.5px;line-height:15px;color:#222;transform:scaleX(1.0390);transform-origin:left 0;">23/10/2025</div>
<div class="t" style="left:669.40px;top:322.05px;font-size:10.5px;line-height:15px;color:#222;transform:scaleX(0.9160);transform-origin:left 0;">PIX</div>
<div class="t" style="left:859.00px;top:322.05px;font-size:10.5px;line-height:15px;word-spacing:0.96px;color:#222;transform:scaleX(0.9890);transform-origin:left 0;">5 - DIAS</div>
<div class="t" style="left:335.96px;top:337.10px;font-size:10.5px;line-height:15px;color:#222;">7</div>
<div class="t" style="left:349.20px;top:337.10px;font-size:10.5px;line-height:15px;color:#222;transform:scaleX(0.9160);transform-origin:left 0;">FR</div>
<div class="t" style="left:430.70px;top:337.10px;font-size:10.5px;line-height:15px;color:#222;">31366</div>
<div class="t" style="left:466.00px;top:337.10px;font-size:10.5px;line-height:15px;color:#222;transform:scaleX(1.1515);transform-origin:left 0;">IK...</div>
<div class="t" style="left:492.80px;top:337.10px;font-size:10.5px;line-height:15px;color:#222;transform:scaleX(1.0390);transform-origin:left 0;">22/09/2025</div>
<div class="t" style="left:577.70px;top:337.10px;font-size:10.5px;line-height:15px;color:#222;transform:scaleX(1.0390);transform-origin:left 0;">22/10/2025</div>
<div class="t" style="left:669.40px;top:337.10px;font-size:10.5px;line-height:15px;word-spacing:0.96px;color:#222;transform:scaleX(0.9424);transform-origin:left 0;">FR - BOLETO SICREDI</div>
<div class="t" style="left:859.00px;top:337.10px;font-size:10.5px;line-height:15px;word-spacing:0.96px;color:#222;transform:scaleX(0.9890);transform-origin:left 0;">5 - DIAS</div>
<div class="t" style="left:335.96px;top:352.15px;font-size:10.5px;line-height:15px;color:#222;">8</div>
<div class="t" style="left:349.20px;top:352.15px;font-size:10.5px;line-height:15px;color:#222;transform:scaleX(0.9160);transform-origin:left 0;">FR</div>
<div class="t" style="left:430.70px;top:352.15px;font-size:10.5px;line-height:15px;color:#222;">29179</div>
<div class="t" style="left:466.00px;top:352.15px;font-size:10.5px;line-height:15px;color:#222;transform:scaleX(1.0644);transform-origin:left 0;">C.</div>
<div class="t" style="left:492.80px;top:352.15px;font-size:10.5px;line-height:15px;color:#222;transform:scaleX(1.0390);transform-origin:left 0;">22/09/2025</div>
<div class="t" style="left:577.70px;top:352.15px;font-size:10.5px;line-height:15px;color:#222;transform:scaleX(1.0390);transform-origin:left 0;">22/10/2025</div>
<div class="t" style="left:669.40px;top:352.15px;font-size:10.5px;line-height:15px;color:#222;transform:scaleX(0.9160);transform-origin:left 0;">PIX</div>
<div class="t" style="left:859.00px;top:352.15px;font-size:10.5px;line-height:15px;word-spacing:0.96px;color:#222;transform:scaleX(0.9890);transform-origin:left 0;">5 - DIAS</div>
<div class="t" style="left:335.96px;top:367.20px;font-size:10.5px;line-height:15px;color:#222;">0</div>
<div class="t" style="left:430.70px;top:367.20px;font-size:10.5px;line-height:15px;color:#222;">16035</div>
<div class="t" style="left:466.00px;top:367.20px;font-size:10.5px;line-height:15px;color:#222;transform:scaleX(0.9447);transform-origin:left 0;">PE...</div>
<div class="t" style="left:492.80px;top:367.20px;font-size:10.5px;line-height:15px;color:#222;transform:scaleX(1.0390);transform-origin:left 0;">19/02/2026</div>
<div class="t" style="left:577.70px;top:367.20px;font-size:10.5px;line-height:15px;color:#222;transform:scaleX(1.0390);transform-origin:left 0;">21/03/2026</div>
<div style="position:absolute;left:278.6px;top:100.6px;width:5px;height:5px;border-radius:50%;background:#222;"></div>
<svg style="position:absolute;left:277px;top:369.5px" width="8" height="10"><path d="M1.2 0.8 H5.8 M3.5 0.8 V8.2 M1.2 8.2 H5.8" fill="none" stroke="#444" stroke-width="1"/></svg>
<svg style="position:absolute;left:0;top:0" width="1024" height="100"><path d="M451.6 82.8 L495.5 46.2" stroke="#ff0000" stroke-width="2.5" stroke-linecap="round"/><path d="M504.4 39 L492.4 43.2 L498.6 50.6 Z" fill="#ff0000"/></svg>
</body></html>
